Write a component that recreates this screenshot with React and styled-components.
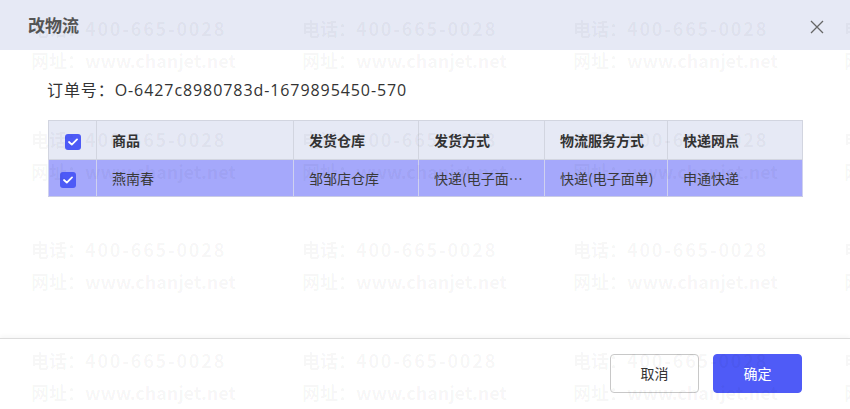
import React from "react";
import styled, { createGlobalStyle } from "styled-components";

const Global = createGlobalStyle`
  html, body { margin: 0; padding: 0; background: #fff; }
  body { font-family: "Noto Sans CJK SC", "Noto Sans", sans-serif; }
  * { box-sizing: border-box; }
`;

const Dialog = styled.div`
  position: relative;
  width: 850px;
  height: 409px;
  background: #fff;
  display: flex;
  flex-direction: column;
  overflow: hidden;
`;

const Header = styled.div`
  height: 50px;
  flex: none;
  background: #e6e9f5;
  display: flex;
  align-items: center;
  justify-content: space-between;
  padding: 0 24px 0 28px;
`;

const Title = styled.div`
  font-size: 17px;
  font-weight: 700;
  color: #555;
  margin-top: -1px;
`;

const CloseBtn = styled.button`
  border: none;
  background: none;
  padding: 0;
  width: 18px;
  height: 18px;
  display: flex;
  align-items: center;
  justify-content: center;
  cursor: pointer;
  margin-top: 4px;
`;

const Body = styled.div`
  flex: 1;
  padding: 28px 48px 0 48px;
`;

const OrderNo = styled.div`
  font-family: "Open Sans", "Noto Sans CJK SC", sans-serif;
  font-size: 16px;
  letter-spacing: 0.92px;
  color: #333;
  line-height: 24px;
  margin-left: -1px;
`;

const Table = styled.table`
  margin-top: 18px;
  width: 754px;
  border-collapse: collapse;
  table-layout: fixed;
  font-size: 14px;
  color: #333;
`;

const Th = styled.th`
  height: 39px;
  background: #e6e9f5;
  border: 1px solid #d2d5e0;
  text-align: ${(p) => (p.$center ? "center" : "left")};
  padding: 0 0 0 ${(p) => (p.$center ? 0 : 15)}px;
  font-weight: 700;
  white-space: nowrap;
`;

const Td = styled.td`
  height: 37px;
  background: #a5a8fb;
  border: 1px solid #cfd1ef;
  border-bottom-color: #c9cbe6;
  text-align: ${(p) => (p.$center ? "center" : "left")};
  padding: 0 ${(p) => p.$pr ?? 10}px 0 ${(p) => (p.$center ? 0 : 15)}px;
  white-space: nowrap;
  overflow: hidden;
  text-overflow: ellipsis;
  color: #3a3a3a;
`;

const Check = styled.span`
  display: inline-flex;
  width: 16px;
  height: 16px;
  border-radius: 3px;
  background: #4d5af6;
  align-items: center;
  justify-content: center;
  vertical-align: middle;
`;

const Footer = styled.div`
  height: 71px;
  flex: none;
  border-top: 1px solid #dcdcdc;
  box-shadow: 0 -2px 4px rgba(0, 0, 0, 0.04);
  display: flex;
  align-items: center;
  justify-content: flex-end;
  gap: 14px;
  padding: 0 48px 2px 0;
`;

const Button = styled.button`
  width: 89px;
  height: 39px;
  border-radius: 4px;
  font-family: inherit;
  font-size: 14px;
  cursor: pointer;
  border: 1px solid ${(p) => (p.$primary ? "#4f5bf7" : "#c8c8c8")};
  background: ${(p) => (p.$primary ? "#4f5bf7" : "#fff")};
  color: ${(p) => (p.$primary ? "#fff" : "#333")};
`;

const Watermark = styled.div`
  position: absolute;
  inset: 0;
  pointer-events: none;
  padding: 12px 0 0 31px;
  display: grid;
  grid-template-columns: repeat(4, 271px);
  grid-auto-rows: 110.7px;
  z-index: 5;
`;

const Mark = styled.div`
  font-size: 18px;
  font-weight: 700;
  line-height: 32px;
  color: rgba(0, 0, 0, 0.045);
  white-space: nowrap;
`;

const MarkText = styled.span`
  letter-spacing: ${(p) => p.$ls}px;
`;

const CheckIcon = () => (
  <svg width="10" height="8" viewBox="0 0 10 8">
    <path d="M1 4 L3.8 6.6 L9 1.4" fill="none" stroke="#fff" strokeWidth="1.8" strokeLinecap="round" strokeLinejoin="round" />
  </svg>
);

const cols = [48, 197, 125, 126, 123, 135];

export default function App() {
  const marks = Array.from({ length: 16 });
  return (
    <>
      <Global />
      <Dialog>
        <Header>
          <Title>改物流</Title>
          <CloseBtn aria-label="close">
            <svg width="14" height="14" viewBox="0 0 14 14">
              <path d="M1 1 L13 13 M13 1 L1 13" stroke="#666" strokeWidth="1.3" />
            </svg>
          </CloseBtn>
        </Header>
        <Body>
          <OrderNo>订单号：O-6427c8980783d-1679895450-570</OrderNo>
          <Table>
            <colgroup>
              {cols.map((w, i) => (
                <col key={i} style={{ width: w }} />
              ))}
            </colgroup>
            <thead>
              <tr>
                <Th $center>
                  <Check><CheckIcon /></Check>
                </Th>
                <Th>商品</Th>
                <Th>发货仓库</Th>
                <Th>发货方式</Th>
                <Th>物流服务方式</Th>
                <Th>快递网点</Th>
              </tr>
            </thead>
            <tbody>
              <tr>
                <Td $center>
                  <Check><CheckIcon /></Check>
                </Td>
                <Td>燕南春</Td>
                <Td>邹邹店仓库</Td>
                <Td $pr={18}>快递(电子面单)</Td>
                <Td>快递(电子面单)</Td>
                <Td>申通快递</Td>
              </tr>
            </tbody>
          </Table>
        </Body>
        <Footer>
          <Button>取消</Button>
          <Button $primary>确定</Button>
        </Footer>
        <Watermark>
          {marks.map((_, i) => (
            <div key={i}>
              <Mark>
                电话：<MarkText $ls={1.8}>400-665-0028</MarkText>
              </Mark>
              <Mark>
                网址：<MarkText $ls={-0.1}>www.chanjet.net</MarkText>
              </Mark>
            </div>
          ))}
        </Watermark>
      </Dialog>
    </>
  );
}
